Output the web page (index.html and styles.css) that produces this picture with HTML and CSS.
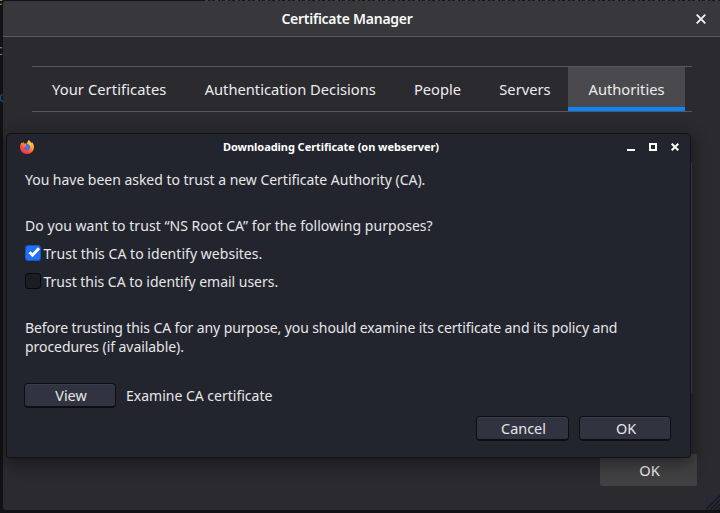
FILE: index.html
```
<!DOCTYPE html>
<html lang="en">
<head>
<meta charset="utf-8">
<title>Certificate Manager</title>
<link rel="stylesheet" href="styles.css">
</head>
<body>
<div class="backdrop" aria-hidden="true">
  <div class="code-line"></div>
  <span class="bit bit-top">e</span><span class="bit bit-mid">c</span><span class="bit bit-blue">o</span>
</div>
<main class="manager">
  <header class="manager-header">
    <h1>Certificate Manager</h1>
    <svg class="close" viewBox="0 0 10 10"><path d="M.7 .7l8.600 8.600M9.300 .7l-8.600 8.600"/></svg>
  </header>
  <nav class="tabs">
    <span class="tab first">Your Certificates</span>
    <span class="tab">Authentication Decisions</span>
    <span class="tab">People</span>
    <span class="tab last">Servers</span>
    <span class="tab selected">Authorities</span>
  </nav>
  <div class="tree"></div>
  <footer class="manager-footer"><button class="accept">OK</button></footer>
  <svg class="grip" viewBox="0 0 14 15"><path class="grip-bg" d="M0 0H14V15H0Z"/><path d="M0 14.500L14 .5M4 15L14 5M8 15L14 9M12 15L14 13"/></svg>
</main>
<section class="dialog">
  <header class="dialog-header">
    <svg class="firefox" viewBox="0 0 14 14">
      <defs><linearGradient id="fire" x1=".85" y1="0" x2=".2" y2="1"><stop offset="0" stop-color="#ffe45a"/><stop offset=".4" stop-color="#ff9a26"/><stop offset=".7" stop-color="#ff4b3c"/><stop offset="1" stop-color="#e72b65"/></linearGradient></defs>
      <path fill="url(#fire)" d="M8.800 0C10 1.300 10.900 1.900 11.300 3L12.100 2.300C13.400 3.900 14 5.600 14 7.300C14 11 11 14 7 14S0 11 0 7.300C0 5.500.7 3.900 1.500 2.600L2 3.500L3.300 2L4.200 3.400L7.200 3.500C7.400 2 7.900.9 8.800 0Z"/>
      <path fill="#3f72e8" d="M4.500 6.200L6 5.500L5.800 4.300C8.500 3.300 10.200 5 10.100 7.100C10 9.200 8.600 10.300 7 10.200C5 10.100 3.800 8.700 3.900 7.200L5.800 7.600L7.100 6.800Z"/>
      <path fill="#ffc93c" d="M8.300 1L10.900 4.200L11.500 7.500L9.900 5.200L7.700 3.700Z"/>
    </svg>
    <h2>Downloading Certificate (on webserver)</h2>
    <div class="controls">
      <svg viewBox="0 0 8 8"><path d="M0 7H8"/></svg>
      <svg viewBox="0 0 8 8"><path d="M1 1H7V7H1Z"/></svg>
      <svg viewBox="0 0 8 8"><path d="M.7 .7L7.300 7.300M7.300 .7L.7 7.300"/></svg>
    </div>
  </header>
  <div class="dialog-body">
    <p class="intro">You have been asked to trust a new Certificate Authority (CA).</p>
    <p class="question">Do you want to trust “NS Root CA” for the following purposes?</p>
    <div class="option"><span class="box checked"><svg viewBox="0 0 15 15"><path d="M3.500 7.200L6.500 10.300L13 3.300"/></svg></span><span class="websites">Trust this CA to identify websites.</span></div>
    <div class="option"><span class="box"></span><span class="email">Trust this CA to identify email users.</span></div>
    <p class="advice">Before trusting this CA for any purpose, you should examine its certificate and its policy and<br><span class="advice-end">procedures (if available).</span></p>
    <div class="examine"><button class="push">View</button><span>Examine CA certificate</span></div>
    <div class="actions"><button class="push wide">Cancel</button><button class="push">OK</button></div>
  </div>
</section>
</body>
</html>
```

FILE: styles.css
```
* { box-sizing: border-box; }
body { margin: 0; width: 720px; height: 513px; overflow: hidden; position: relative; background: #121214; color: #ececee; font: 14px/19px "Noto Sans", sans-serif; }
h1, h2, p { margin: 0; }
button { font: inherit; color: inherit; padding: 0; white-space: nowrap; }
svg { display: block; }
.code-line { position: absolute; left: 205px; right: 0; top: 0; height: 1px; background: repeating-linear-gradient(90deg, #45413b 0 3px, #17171a 3px 5px, #29384b 5px 7px, #17171a 7px 10px); }
.bit { position: absolute; left: -5px; color: #8b7967; }
.bit-top { top: -10px; }
.bit-mid { top: 40px; left: -4px; }
.bit-blue { top: 87px; left: -1px; color: #174f83; }
.manager { position: absolute; left: 3px; top: 1px; width: 730px; height: 509px; background: #2b2a2e; border-radius: 3px; overflow: hidden; display: flex; flex-direction: column; }
.manager-header { height: 36px; flex: none; background: #38373b; border-bottom: 1px solid #5b5b5e; position: relative; padding: 8px 42px 0 0; text-align: center; }
h1 { font-size: 14px; line-height: 19px; font-weight: 600; letter-spacing: -.26px; color: #fafafa; }
.close { position: absolute; left: 693px; top: 13px; width: 10px; height: 10px; fill: none; stroke: #f7f7f7; stroke-width: 1.8; }
.tabs { margin: 29px 0 0 29px; width: 660px; height: 46px; flex: none; border: solid #58575b; border-width: 1px 0; display: flex; font-size: 14.7px; }
.tab { flex: none; padding: 13px 18.200px 0 20px; white-space: nowrap; }
.first { letter-spacing: .09px; }
.last { padding-right: 10px; }
.selected { margin-left: auto; margin-right: 7px; width: 117px; padding: 13px 0 0; text-align: center; background: #4a494d; border-bottom: 4px solid #0a84ff; }
.tree { margin: 51px 0 0 29px; width: 660px; height: 230px; border: 1px solid #48474b; flex: none; }
.manager-footer { margin: 61px 36px 0 0; display: flex; justify-content: flex-end; }
.accept { width: 97px; height: 32px; border: 0; border-radius: 2px; background: #414042; font-size: 14.7px; padding-left: 2px; }
.grip { position: absolute; left: 703px; bottom: 0; width: 14px; height: 15px; fill: none; stroke: #15171d; stroke-width: 1.300; }
.grip-bg { fill: #272a35; stroke: none; }
.dialog { position: absolute; left: 6px; top: 133px; width: 685px; height: 325px; border: 1px solid #111218; border-radius: 5px 5px 3px 3px; background: #23252e; box-shadow: 0 4px 16px 2px #0006; color: #e6e6e8; }
.dialog-header { height: 26px; display: flex; align-items: center; padding: 0 11px 0 13px; }
.firefox { width: 14px; height: 14px; }
h2 { flex: 1; padding-left: 1px; text-align: center; font-size: 11px; font-weight: 700; line-height: 18px; letter-spacing: -.05px; color: #fff; }
.controls { display: flex; gap: 14px; }
.controls svg { width: 8px; height: 8px; fill: none; stroke: #fff; stroke-width: 2; }
.dialog-body { padding: 10px 18px 0; white-space: nowrap; }
.intro { letter-spacing: -.03px; }
.question { margin-top: 27px; letter-spacing: .045px; }
.option { display: flex; height: 19px; margin-top: 9px; gap: 2.500px; align-items: center; }
.websites { letter-spacing: .04px; }
.email { letter-spacing: -.02px; }
.box { width: 16px; height: 16px; margin-bottom: 2px; border: 1px solid #08090c; border-radius: 3px; background: #1b1d24; }
.checked { background: #2270f5; border-color: #1755c4; }
.checked svg { width: 15px; height: 15px; margin: -1px 0 0; fill: none; stroke: #fff; stroke-width: 2.800; }
.advice { margin-top: 27px; letter-spacing: -.11px; }
.advice-end { letter-spacing: -.06px; }
.examine { margin: 27px 0 0 -1px; display: flex; align-items: center; gap: 10px; }
.push { width: 92px; height: 25px; border: 1px solid #0c0e14; border-bottom-width: 2px; border-radius: 4px; background: #313440; box-shadow: inset 0 1px #3b3e4a; font-size: 14.400px; padding-left: 2px; }
.wide { width: 93px; }
.actions { margin-top: 8px; display: flex; justify-content: flex-end; gap: 10px; padding-right: 1px; }
```
